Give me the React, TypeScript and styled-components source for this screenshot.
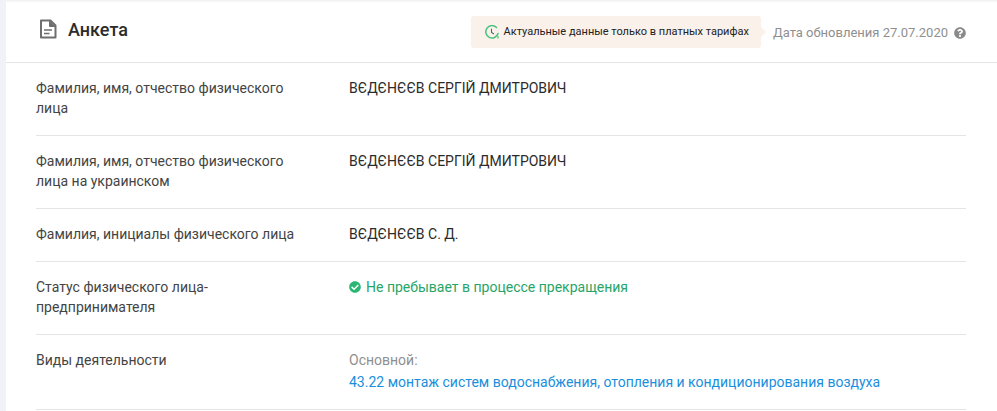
import React from 'react';
import styled, { createGlobalStyle } from 'styled-components';
import { FaCheckCircle, FaQuestionCircle } from 'react-icons/fa';

const GlobalStyle = createGlobalStyle`
  html, body {
    margin: 0;
    padding: 0;
    height: 100%;
    overflow: hidden;
    background: #f1f2f7;
    font-family: Roboto, "Liberation Sans", sans-serif;
  }
`;

const Page = styled.div`
  padding-left: 6px;
  height: 411px;
  overflow: hidden;
`;

const Card = styled.section`
  background: #fff;
  height: 411px;
  box-shadow: inset 0 4px 3px -3px rgba(0, 0, 0, 0.08);
`;

const Header = styled.header`
  height: 63px;
  box-sizing: border-box;
  border-bottom: 1px solid #e5e5e5;
  display: flex;
  align-items: center;
  padding: 0 31px 0 33px;
`;

const Title = styled.h2`
  margin: 0 0 4px 11px;
  font-size: 18px;
  font-weight: 500;
  color: #2b2b2b;
  flex: 1;
`;

const Notice = styled.div`
  position: relative;
  height: 32px;
  display: flex;
  align-items: center;
  gap: 5px;
  padding: 0 12px 0 14px;
  margin: 1px 12px 0 0;
  background: #f9f1ea;
  border-radius: 3px;
  font-size: 11px;
  color: #222;

  &::after {
    content: '';
    position: absolute;
    right: -5px;
    top: 11px;
    border-left: 5px solid #f9f1ea;
    border-top: 5px solid transparent;
    border-bottom: 5px solid transparent;
  }
`;

const Updated = styled.span`
  font-size: 13px;
  color: #8f8f8f;
  margin-top: 3px;
`;

const Help = styled.span`
  display: flex;
  margin: 3px 0 0 6px;
  color: #8a8a8a;
  font-size: 12px;
`;

const Rows = styled.div`
  padding: 0 31px 0 30px;
`;

const Row = styled.div`
  display: grid;
  grid-template-columns: 313px 1fr;
  padding: 15px 0 17px;
  border-bottom: 1px solid #e5e5e5;
  font-size: 14px;
  line-height: 20px;
  box-sizing: border-box;
  min-height: 53px;
`;

const Label = styled.div`
  color: #444;
  width: 260px;
`;

const Value = styled.div`
  color: #2b2b2b;
`;

const Status = styled.div`
  display: flex;
  align-items: center;
  gap: 5px;
  color: #27a567;
  height: 20px;

  svg {
    color: #2bb673;
    font-size: 12px;
  }
`;

const Muted = styled.div`
  color: #8f8f8f;
  margin-bottom: 2px;
`;

const ActivityLink = styled.a`
  color: #1a8fdd;
  text-decoration: none;
  display: block;
`;

const DocSvg = styled.svg`
  margin-bottom: 4px;
`;

const DocIcon = () => (
  <DocSvg width="18" height="20" viewBox="0 0 18 20" fill="none" stroke="#6e6e6e">
    <path d="M2 1.5h9.5L16.500 6.500V18.500H2z" strokeWidth="2" strokeLinejoin="round" />
    <path d="M10.500 2v5.500H16z" fill="#6e6e6e" strokeWidth="1" />
    <path d="M5 11h8M5 14.500h5.500" strokeWidth="1.600" />
  </DocSvg>
);

const ClockIcon = () => (
  <svg width="14" height="14" viewBox="0 0 14 14" fill="none" stroke="#45c27a" strokeWidth="1.500">
    <path d="M13 8.500A6.200 6.200 0 1 1 11.500 2.500" strokeLinecap="round" />
    <path d="M6.500 3.800V7.500L9 9" stroke="#4f6b58" strokeWidth="1.100" />
    <path d="M13 11v2.500" strokeWidth="1.200" />
  </svg>
);

const App: React.FC = () => (
  <Page>
    <GlobalStyle />
    <Card>
      <Header>
        <DocIcon />
        <Title>Анкета</Title>
        <Notice>
          <ClockIcon />
          Актуальные данные только в платных тарифах
        </Notice>
        <Updated>Дата обновления 27.07.2020</Updated>
        <Help><FaQuestionCircle /></Help>
      </Header>
      <Rows>
        <Row>
          <Label>Фамилия, имя, отчество физического лица</Label>
          <Value>ВЄДЄНЄЄВ СЕРГІЙ ДМИТРОВИЧ</Value>
        </Row>
        <Row>
          <Label>Фамилия, имя, отчество физического лица на украинском</Label>
          <Value>ВЄДЄНЄЄВ СЕРГІЙ ДМИТРОВИЧ</Value>
        </Row>
        <Row>
          <Label>Фамилия, инициалы физического лица</Label>
          <Value>ВЄДЄНЄЄВ С. Д.</Value>
        </Row>
        <Row>
          <Label>Статус физического лица-предпринимателя</Label>
          <Status><FaCheckCircle />Не пребывает в процессе прекращения</Status>
        </Row>
        <Row>
          <Label>Виды деятельности</Label>
          <Value>
            <Muted>Основной:</Muted>
            <ActivityLink href="#">43.22 монтаж систем водоснабжения, отопления и кондиционирования воздуха</ActivityLink>
          </Value>
        </Row>
      </Rows>
    </Card>
  </Page>
);

export default App;
